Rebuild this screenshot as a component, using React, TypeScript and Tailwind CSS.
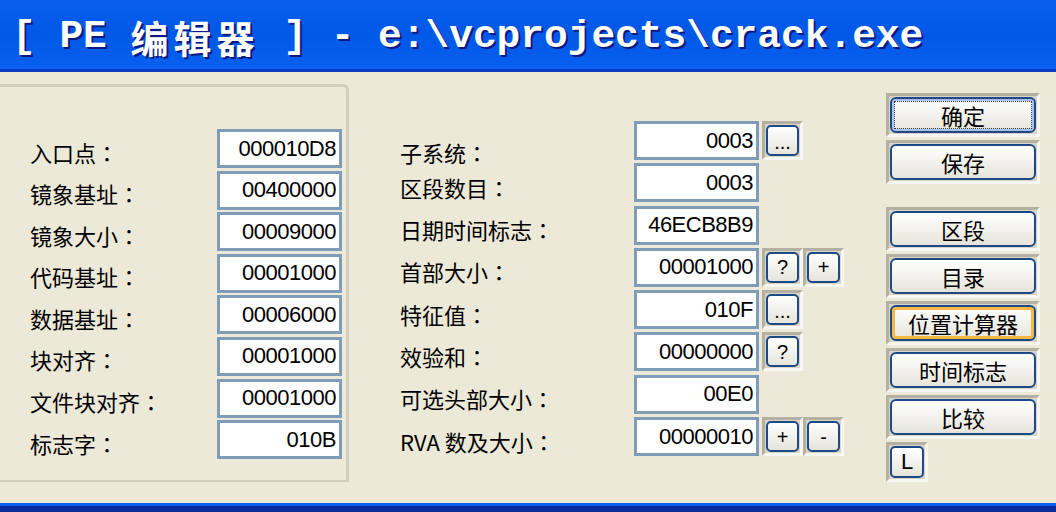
import React from "react";

type Row = { label: string; value: string; lift?: string; extras?: string[] };

const leftRows: Row[] = [
  { label: "入口点", value: "000010D8" },
  { label: "镜象基址", value: "00400000" },
  { label: "镜象大小", value: "00009000" },
  { label: "代码基址", value: "00001000" },
  { label: "数据基址", value: "00006000" },
  { label: "块对齐", value: "00001000" },
  { label: "文件块对齐", value: "00001000" },
  { label: "标志字", value: "010B" },
];

const rightRows: Row[] = [
  { label: "子系统", value: "0003", lift: "pt-[22px]", extras: ["..."] },
  { label: "区段数目", value: "0003" },
  { label: "日期时间标志", value: "46ECB8B9" },
  { label: "首部大小", value: "00001000", extras: ["?", "+"] },
  { label: "特征值", value: "010F", extras: ["..."] },
  { label: "效验和", value: "00000000", extras: ["?"] },
  { label: "可选头部大小", value: "00E0" },
  { label: "RVA 数及大小", value: "00000010", extras: ["+", "-"] },
];

const Label = ({ text }: { text: string }) => (
  <>
    {text}
    <span className="font-['Noto_Sans_CJK_TC',sans-serif]">：</span>
  </>
);

const Field = ({ value }: { value: string }) => (
  <div className="w-[125px] h-full shrink-0 border-[3px] border-[#7F9DB9] bg-white flex items-center justify-end pr-[3px] text-[22px] leading-none text-black font-['Liberation_Sans',sans-serif] tracking-[-0.5px]">
    {value}
  </div>
);

const SmallBtn = ({ label }: { label: string }) => (
  <div className="w-[41px] h-full shrink-0 flex border-[3px] border-t-[#B4B1A2] border-l-[#B4B1A2] border-r-[#F7F6F1] border-b-[#F7F6F1] bg-[#D8D5C6] p-[1px]">
    <div
      className={
        "flex-1 rounded-[5px] border-2 border-[#1C4A86] bg-gradient-to-b from-[#FFFFFF] to-[#E6E4DB] flex justify-center text-black font-['Liberation_Sans',sans-serif] text-[20px] leading-none " +
        (label === "..." ? "items-end pb-[2px] text-[16px]" : "items-center")
      }
    >
      {label}
    </div>
  </div>
);

const BigBtn = ({ label, kind }: { label: string; kind?: "focus" | "hover" }) => (
  <div className="w-[154px] h-[44px] shrink-0 flex border-[3px] border-t-[#B4B1A2] border-l-[#B4B1A2] border-r-[#F7F6F1] border-b-[#F7F6F1] bg-[#D8D5C6] p-[1px]">
    <div
      className={
        "flex-1 rounded-[6px] border-2 border-[#1C4A86] bg-gradient-to-b from-[#FFFFFF] to-[#E6E4DB] flex items-center justify-center text-black text-[22px] leading-none font-['Noto_Sans_CJK_SC',sans-serif] " +
        (kind === "focus"
          ? "shadow-[inset_0_0_0_2px_#A9C0F4]"
          : kind === "hover"
          ? "shadow-[inset_0_0_0_3px_#F5B840]"
          : "")
      }
    >
      {kind === "focus" ? (
        <div className="w-[138px] h-[28px] border border-dotted border-[#3A3A3A] flex items-center justify-center">
          {label}
        </div>
      ) : (
        label
      )}
    </div>
  </div>
);

export default function App() {
  return (
    <div className="w-[1056px] h-[512px] overflow-hidden bg-[#ECE9D8] flex flex-col">
      <div className="h-[72px] shrink-0 bg-gradient-to-b from-[#0A5EEE] via-[#0058E6] to-[#0A60F0] border-b-[3px] border-[#0B3CC0] flex items-center pl-[12px] pt-[5px] text-white font-bold [text-shadow:2px_2px_0_#0C1A80] whitespace-pre">
        <span className="font-['Liberation_Mono',monospace] text-[39.5px] leading-none">[ PE </span>
        <span className="font-['Noto_Sans_CJK_SC',sans-serif] text-[38px] leading-none tracking-[5px]">编辑器</span>
        <span className="font-['Liberation_Mono',monospace] text-[39.5px] leading-none"> ] - e:\vcprojects\crack.exe</span>
      </div>

      <div className="flex-1 flex items-start">
        <div className="mt-[12px] w-[349px] h-[398px] shrink-0 border-t-[3px] border-r-[3px] border-b-2 border-[#D2CFBF] rounded-tr-[6px] pl-[30px] pt-[42px] flex flex-col gap-[2.6px]">
          {leftRows.map((r) => (
            <div key={r.label} className="h-[39px] flex">
              <div className="w-[187px] pt-[6px] flex items-center text-[22px] leading-none text-black font-['Noto_Sans_CJK_SC',sans-serif]">
                <Label text={r.label} />
              </div>
              <Field value={r.value} />
            </div>
          ))}
        </div>

        <div className="ml-[51px] mt-[49px] w-[486px] shrink-0 flex flex-col gap-[3.3px]">
          {rightRows.map((r) => (
            <div key={r.label} className="h-[39px] flex">
              <div
                className={
                  "w-[234px] flex items-center text-[22px] leading-none text-black font-['Noto_Sans_CJK_SC',sans-serif] " +
                  (r.lift ?? "pt-[8px]")
                }
              >
                <Label text={r.label} />
              </div>
              <Field value={r.value} />
              <div className="ml-[3px] flex h-full">
                {(r.extras ?? []).map((e, i) => (
                  <SmallBtn key={i} label={e} />
                ))}
              </div>
            </div>
          ))}
        </div>

        <div className="mt-[21px] flex flex-col gap-[3px]">
          <BigBtn label="确定" kind="focus" />
          <BigBtn label="保存" />
          <div className="h-[17px]" />
          <BigBtn label="区段" />
          <BigBtn label="目录" />
          <BigBtn label="位置计算器" kind="hover" />
          <BigBtn label="时间标志" />
          <BigBtn label="比较" />
          <div className="w-[42px] h-[40px] flex border-[3px] border-t-[#B4B1A2] border-l-[#B4B1A2] border-r-[#F7F6F1] border-b-[#F7F6F1] bg-[#D8D5C6] p-[1px]">
            <div className="flex-1 rounded-[5px] border-2 border-[#1C4A86] bg-gradient-to-b from-[#FFFFFF] to-[#E6E4DB] flex items-center justify-center text-black text-[22px] leading-none font-['Liberation_Sans',sans-serif]">
              L
            </div>
          </div>
        </div>
      </div>

      <div className="h-[9px] shrink-0 bg-[#0A2C9A] border-t-[3px] border-[#0A5EF0]" />
    </div>
  );
}
